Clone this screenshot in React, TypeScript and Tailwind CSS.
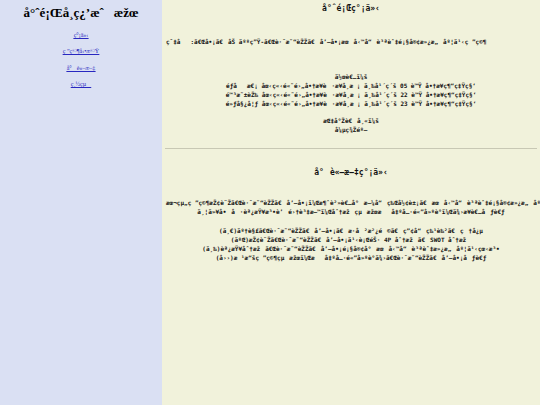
import React from "react";

const CP: Record<number, string> = {
  0x80: "€", 0x82: "‚", 0x83: "ƒ", 0x84: "„", 0x85: "…", 0x86: "†", 0x87: "‡", 0x88: "ˆ", 0x89: "‰",
  0x8a: "Š", 0x8b: "‹", 0x8c: "Œ", 0x8e: "Ž", 0x91: "‘", 0x92: "’", 0x93: "“", 0x94: "”", 0x95: "•",
  0x96: "–", 0x97: "—", 0x98: "˜", 0x99: "™", 0x9a: "š", 0x9b: "›", 0x9c: "œ", 0x9e: "ž", 0x9f: "Ÿ",
};

// The page shows UTF-8 text read as windows-1252; rebuild that text from the original Chinese.
function m(s: string): string {
  const bytes = new TextEncoder().encode(s);
  let out = "";
  for (const b of bytes) out += CP[b] ?? String.fromCharCode(b);
  return out;
}

export default function App() {
  return (
    <div className="flex w-[540px] h-[405px] overflow-hidden">
      <aside className="w-[162px] shrink-0 bg-[#dae0f3] flex flex-col items-center font-['Liberation_Serif',serif]">
        <h1 className="mt-[5px] text-[13px] leading-[16px] font-bold text-black whitespace-nowrap">
          {m("專題學習成果")}
        </h1>
        <nav className="flex flex-col items-center text-[6px] leading-[8px] text-[#2828c0] underline">
          <a className="mt-[10px]">{m("簡介")}</a>
          <a className="mt-[8px]">{m("研究動機")}</a>
          <a className="mt-[9px]">{m("小論文")}</a>
          <a className="mt-[8px]">{m("總結")}</a>
        </nav>
      </aside>
      <main className="flex-1 min-w-0 bg-[#f1f2db] px-[4px] text-center text-[#111] whitespace-pre font-['DejaVu_Sans_Mono',monospace] font-bold">
        <h2 className="mt-[4px] text-[8px] leading-[10px]">{m("專題簡介")}</h2>
        <p className="mt-[23px] text-[6px] leading-[9px] text-left">
          {m("篇名:「啡」加人生-「路易莎」咖啡服務品質與顧客滿意度之研究")}
        </p>
        <div className="mt-[26px] text-[6px] leading-[9px]">
          <div>{m("作者：")}</div>
          <div>{m("郭名怡 國立高雄商業職業學校 三年級 05 號 商業經營科")}</div>
          <div>{m("陳昱莉 國立高雄商業職業學校 三年級 22 號 商業經營科")}</div>
          <div>{m("黃姿妃 國立高雄商業職業學校 三年級 23 號 商業經營科")}</div>
        </div>
        <div className="mt-[8px] text-[6px] leading-[9px]">
          <div>{m("指導老師：")}</div>
          <div>{m("張美麗")}</div>
        </div>
        <hr className="mt-[14px] mx-[-1px] border-0 border-t border-[#c8c8b4]" />
        <h2 className="mt-[19px] text-[8px] leading-[10px]">{m("小論文簡介")}</h2>
        <div className="mt-[20px] text-[6px] leading-[9px]">
          <div className="text-left">{m("本組研究探討「路易莎」咖啡，消費者對於品牌形象、服務品質與顧客滿意度之關係")}</div>
          <div>{m("並以問卷調查法蒐集資料，分析結果提出具體建議，供業者參考")}</div>
        </div>
        <div className="mt-[10px] text-[6px] leading-[9px]">
          <div>{m("(一)了解「路易莎」咖啡、歷史沿革、產品特色、理念")}</div>
          <div>{m("(二)探討「路易莎」咖啡之行銷 4P 分析、SWOT 分析")}</div>
          <div>{m("(三)調查分析「路易莎」咖啡顧客對服務品質與滿意度之看法")}</div>
          <div>{m("(四)根據研究結果，提出具體建議供「路易莎」咖啡參考")}</div>
        </div>
      </main>
    </div>
  );
}
